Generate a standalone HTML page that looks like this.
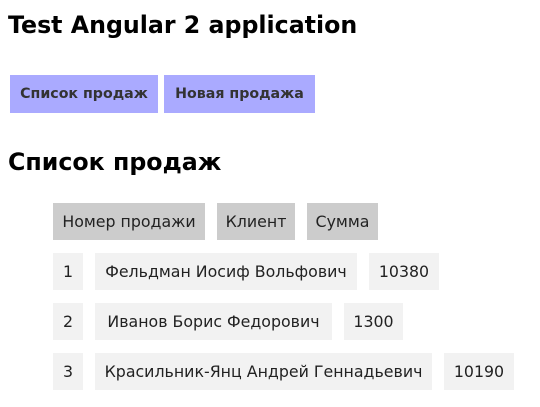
<!DOCTYPE html>
<html><head><meta charset="utf-8"><style>
body{margin:0;width:540px;height:407px;background:#fff;font-family:"DejaVu Sans","Liberation Sans",sans-serif;position:relative;overflow:hidden}
.a{position:absolute;display:flex;align-items:center;justify-content:center;white-space:nowrap}
h1,h2{position:absolute;margin:0;font-size:23.7px;font-weight:bold;left:8px;color:#000;white-space:nowrap}
.b{background:#aaaaff;color:#333;font-weight:bold;font-size:14.2px;height:38px;top:75px}
.h{background:#cccccc;color:#222;font-size:15.8px;height:37px}
.c{background:#f2f2f2;color:#222;font-size:15.8px;height:37px}
</style></head><body>
<h1 style="top:11px">Test Angular 2 application</h1>
<div class="a b" style="left:10px;width:148px">Список продаж</div>
<div class="a b" style="left:164px;width:151px">Новая продажа</div>
<h2 style="top:148px">Список продаж</h2>
<div class="a h" style="top:203px;left:53px;width:152px">Номер продажи</div>
<div class="a h" style="top:203px;left:217px;width:78px">Клиент</div>
<div class="a h" style="top:203px;left:307px;width:71px">Сумма</div>
<div class="a c" style="top:253px;left:53px;width:30px">1</div>
<div class="a c" style="top:253px;left:95px;width:262px">Фельдман Иосиф Вольфович</div>
<div class="a c" style="top:253px;left:369px;width:70px">10380</div>
<div class="a c" style="top:303px;left:53px;width:30px">2</div>
<div class="a c" style="top:303px;left:95px;width:237px">Иванов Борис Федорович</div>
<div class="a c" style="top:303px;left:344px;width:59px">1300</div>
<div class="a c" style="top:353px;left:53px;width:30px">3</div>
<div class="a c" style="top:353px;left:95px;width:337px">Красильник-Янц Андрей Геннадьевич</div>
<div class="a c" style="top:353px;left:444px;width:70px">10190</div>
</body></html>
